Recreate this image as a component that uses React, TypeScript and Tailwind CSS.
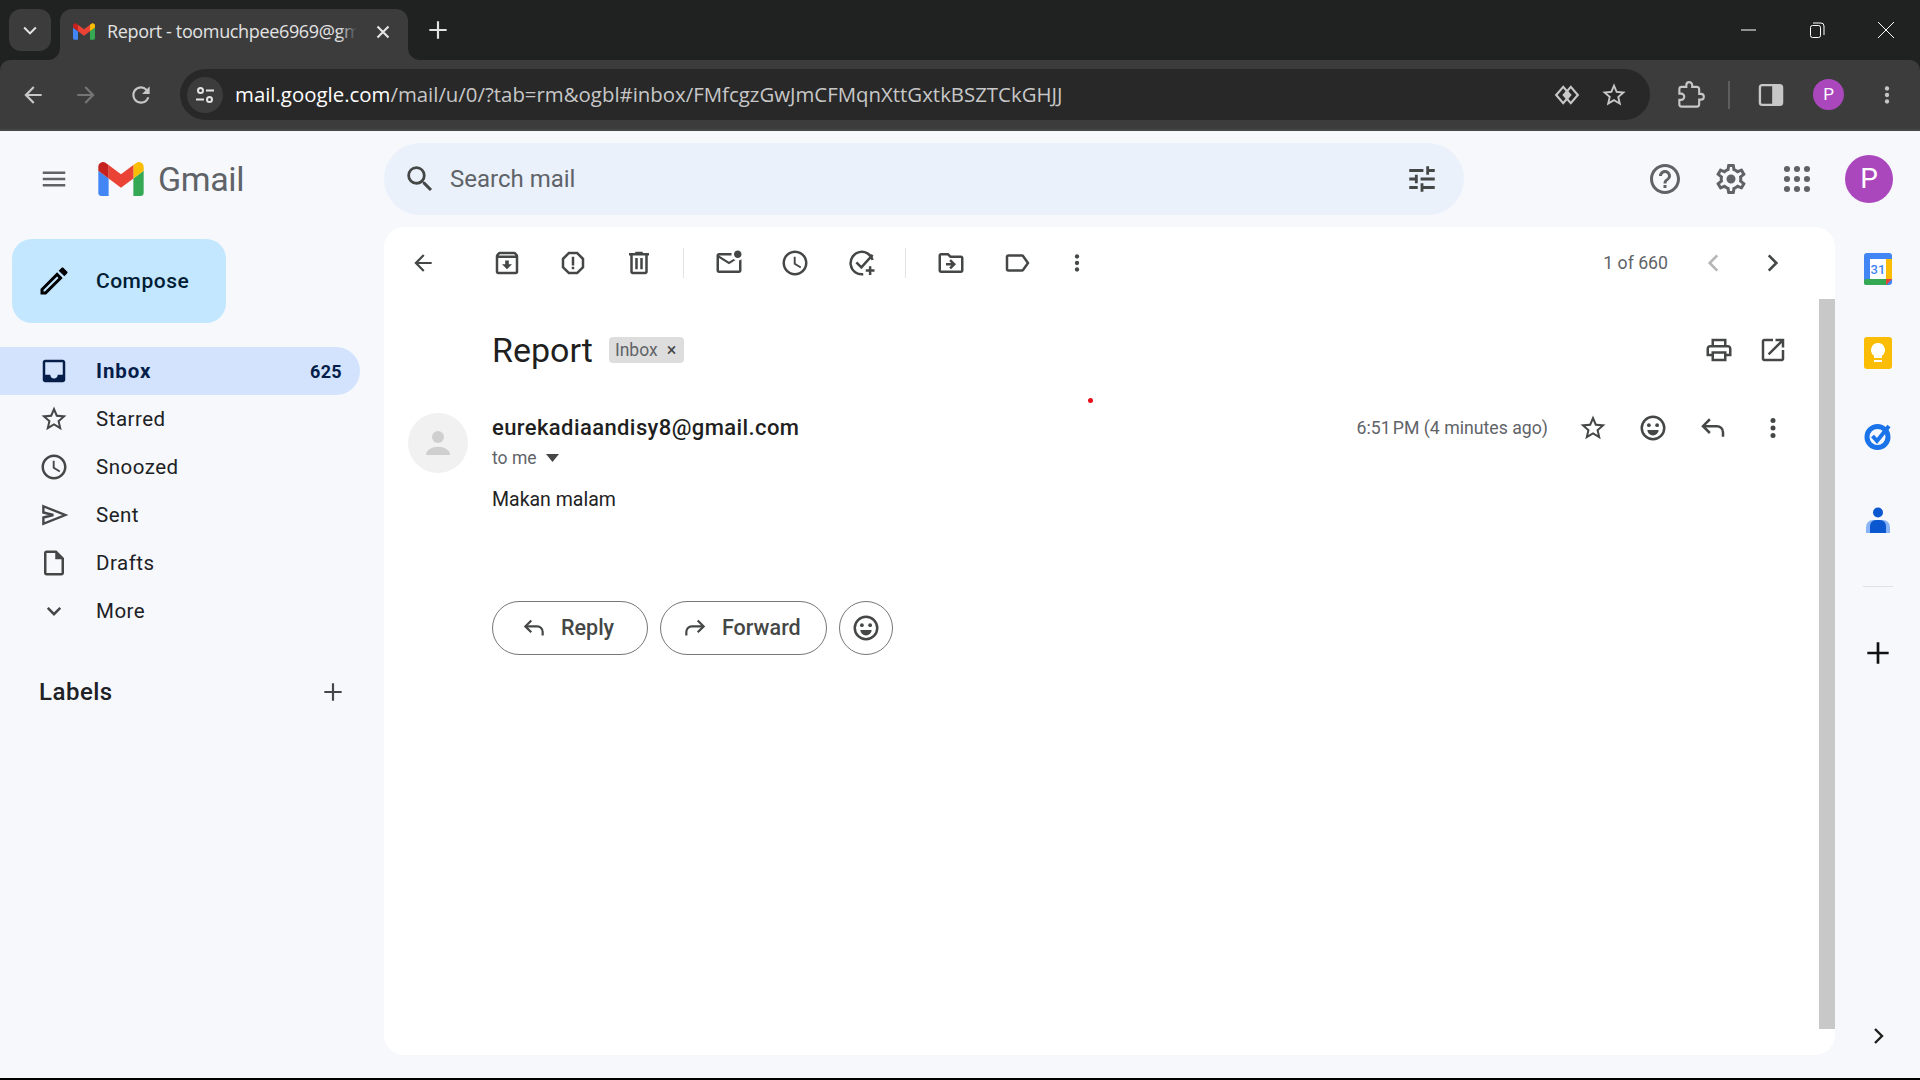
import type { ReactNode } from "react";

const paths = {
  menu: "M3 18h18v-2H3v2zm0-5h18v-2H3v2zm0-7v2h18V6H3z",
  search:
    "M15.5 14h-.79l-.28-.27A6.471 6.471 0 0 0 16 9.5 6.5 6.5 0 1 0 9.5 16c1.61 0 3.09-.59 4.23-1.57l.27.28v.79l5 4.99L20.49 19l-4.99-5zm-6 0C7.01 14 5 11.99 5 9.5S7.01 5 9.5 5 14 7.01 14 9.5 11.99 14 9.5 14z",
  tune: "M3 17v2h6v-2H3zM3 5v2h10V5H3zm10 16v-2h8v-2h-8v-2h-2v6h2zM7 9v2H3v2h4v2h2V9H7zm14 4v-2H11v2h10zm-6-4h2V7h4V5h-4V3h-2v6z",
  help: "M11 18h2v-2h-2v2zm1-16C6.48 2 2 6.48 2 12s4.48 10 10 10 10-4.48 10-10S17.52 2 12 2zm0 18c-4.41 0-8-3.59-8-8s3.59-8 8-8 8 3.59 8 8-3.59 8-8 8zm0-14c-2.21 0-4 1.79-4 4h2c0-1.1.9-2 2-2s2 .9 2 2c0 2-3 1.75-3 5h2c0-2.25 3-2.5 3-5 0-2.21-1.79-4-4-4z",
  settings:
    "M19.43 12.98c.04-.32.07-.64.07-.98 0-.34-.03-.66-.07-.98l2.11-1.65c.19-.15.24-.42.12-.64l-2-3.46c-.09-.16-.26-.25-.44-.25-.06 0-.12.01-.17.03l-2.49 1c-.52-.4-1.08-.73-1.69-.98l-.38-2.65C14.46 2.18 14.25 2 14 2h-4c-.25 0-.46.18-.49.42l-.38 2.65c-.61.25-1.17.59-1.69.98l-2.49-1c-.06-.02-.12-.03-.18-.03-.17 0-.34.09-.43.25l-2 3.46c-.13.22-.07.49.12.64l2.11 1.65c-.04.32-.07.65-.07.98 0 .33.03.66.07.98l-2.11 1.65c-.19.15-.24.42-.12.64l2 3.46c.09.16.26.25.44.25.06 0 .12-.01.17-.03l2.49-1c.52.4 1.08.73 1.69.98l.38 2.65c.03.24.24.42.49.42h4c.25 0 .46-.18.49-.42l.38-2.65c.61-.25 1.17-.59 1.69-.98l2.49 1c.06.02.12.03.18.03.17 0 .34-.09.43-.25l2-3.46c.12-.22.07-.49-.12-.64l-2.11-1.65zm-1.98-1.71c.04.31.05.52.05.73 0 .21-.02.43-.05.73l-.14 1.13.89.7 1.08.84-.7 1.21-1.27-.51-1.04-.42-.9.68c-.43.32-.84.56-1.25.73l-1.06.43-.16 1.13-.2 1.35h-1.4l-.19-1.35-.16-1.13-1.06-.43c-.43-.18-.83-.41-1.23-.71l-.91-.7-1.06.43-1.27.51-.7-1.21 1.08-.84.89-.7-.14-1.13c-.03-.31-.05-.54-.05-.74s.02-.43.05-.73l.14-1.13-.89-.7-1.08-.84.7-1.21 1.27.51 1.04.42.9-.68c.43-.32.84-.56 1.25-.73l1.06-.43.16-1.13.2-1.35h1.39l.19 1.35.16 1.13 1.06.43c.43.18.83.41 1.23.71l.91.7 1.06-.43 1.27-.51.7 1.21-1.07.85-.89.7.14 1.13zM12 9a3 3 0 1 0 0 6 3 3 0 0 0 0-6z",
  archive:
    "M20.54 5.23l-1.39-1.68C18.88 3.21 18.47 3 18 3H6c-.47 0-.88.21-1.16.55L3.46 5.23C3.17 5.57 3 6.02 3 6.5V19c0 1.1.9 2 2 2h14c1.1 0 2-.9 2-2V6.5c0-.48-.17-.93-.46-1.27zM6.24 5h11.52l.83 1H5.42l.82-1zM5 19V8h14v11H5zm8.45-9h-2.9v3H8l4 4 4-4h-2.55z",
  report:
    "M15.73 3H8.27L3 8.27v7.46L8.27 21h7.46L21 15.73V8.27L15.73 3zM19 14.9L14.9 19H9.1L5 14.9V9.1L9.1 5h5.8L19 9.1v5.8zM11 7h2v7h-2zM11 15h2v2h-2z",
  trash:
    "M15 4V3H9v1H4v2h1v13c0 1.1.9 2 2 2h10c1.1 0 2-.9 2-2V6h1V4h-5zm2 15H7V6h10v13zM9 8h2v9H9zm4 0h2v9h-2z",
  unread:
    "M22 8.98V18c0 1.1-.9 2-2 2H4c-1.1 0-2-.9-2-2V6c0-1.1.9-2 2-2h10.1c-.06.32-.1.66-.1 1 0 .34.04.68.1 1H4l8 5 3.67-2.29c.47.43 1.02.76 1.63.98L12 13 4 8v10h16V9.9c.74-.15 1.42-.48 2-.92zM16 5c0 1.66 1.34 3 3 3s3-1.34 3-3-1.34-3-3-3-3 1.34-3 3z",
  clock:
    "M11.99 2C6.47 2 2 6.48 2 12s4.47 10 9.99 10C17.52 22 22 17.52 22 12S17.52 2 11.99 2zM12 20c-4.42 0-8-3.58-8-8s3.58-8 8-8 8 3.58 8 8-3.58 8-8 8zm.5-13H11v6l5.25 3.15.75-1.23-4.5-2.67z",
  move: "M20 6h-8l-2-2H4c-1.1 0-1.99.9-1.99 2L2 18c0 1.1.9 2 2 2h16c1.1 0 2-.9 2-2V8c0-1.1-.9-2-2-2zm0 12H4V6h5.17l2 2H20v10zm-8.01-9l-1.41 1.41L12.16 12H8v2h4.16l-1.59 1.59L11.99 17 16 13.01 11.99 9z",
  label:
    "M17.63 5.84C17.27 5.33 16.67 5 16 5L5 5.01C3.9 5.01 3 5.9 3 7v10c0 1.1.9 1.99 2 1.99L16 19c.67 0 1.27-.33 1.63-.84L22 12l-4.37-6.16zM16 17H5V7h11l3.55 5L16 17z",
  print:
    "M19 8h-1V3H6v5H5c-1.66 0-3 1.34-3 3v6h4v4h12v-4h4v-6c0-1.66-1.34-3-3-3zM8 5h8v3H8V5zm8 12v2H8v-4h8v2zm2-2v-2H6v2H4v-4c0-.55.45-1 1-1h14c.55 0 1 .45 1 1v4h-2z",
  open: "M19 19H5V5h7V3H5c-1.11 0-2 .9-2 2v14c0 1.1.89 2 2 2h14c1.1 0 2-.9 2-2v-7h-2v7zM14 3v2h3.59l-9.83 9.83 1.41 1.41L19 6.41V10h2V3h-7z",
  star: "M22 9.24l-7.19-.62L12 2 9.19 8.63 2 9.24l5.46 4.73L5.82 21 12 17.27 18.18 21l-1.63-7.03L22 9.24zM12 15.4l-3.76 2.27 1-4.28-3.32-2.88 4.38-.38L12 6.1l1.71 4.04 4.38.38-3.32 2.88 1 4.28L12 15.4z",
  inbox:
    "M19 3H5c-1.1 0-2 .9-2 2v14c0 1.1.9 2 2 2h14c1.1 0 2-.9 2-2V5c0-1.1-.9-2-2-2zm0 12h-4c0 1.66-1.35 3-3 3s-3-1.34-3-3H4.99V5H19v10z",
  draft:
    "M14 2H6c-1.1 0-2 .9-2 2v16c0 1.1.89 2 1.99 2H18c1.1 0 2-.9 2-2V8l-6-6zM6 20V4h7v5h5v11H6z",
  pencil:
    "M3 17.25V21h3.75L17.81 9.94l-3.75-3.75L3 17.25zM5.92 19H5v-.92l9.06-9.06.92.92L5.92 19zM20.71 5.63l-2.34-2.34c-.2-.2-.45-.29-.71-.29s-.51.1-.7.29l-1.83 1.83 3.75 3.75 1.83-1.83c.39-.39.39-1.02 0-1.41z",
  plus: "M20 13h-7v7h-2v-7H4v-2h7V4h2v7h7v2z",
};

const Icon = ({ d, className = "w-[30px] h-[30px] text-[#444746]" }: { d: string; className?: string }) => (
  <svg viewBox="0 0 24 24" fill="currentColor" className={className}>
    <path d={d} />
  </svg>
);

const Stroke = ({ children, className = "w-[30px] h-[30px] text-[#444746]", width = 2 }: { children: ReactNode; className?: string; width?: number }) => (
  <svg viewBox="0 0 24 24" fill="none" stroke="currentColor" strokeWidth={width} className={className}>
    {children}
  </svg>
);

const MoreVert = ({ className = "w-[30px] h-[30px] text-[#444746]" }: { className?: string }) => (
  <svg viewBox="0 0 24 24" fill="currentColor" className={className}>
    <circle cx="12" cy="6" r="2" />
    <circle cx="12" cy="12" r="2" />
    <circle cx="12" cy="18" r="2" />
  </svg>
);

const Smile = ({ className = "w-[30px] h-[30px] text-[#444746]" }: { className?: string }) => (
  <svg viewBox="0 0 24 24" className={className}>
    <circle cx="12" cy="12" r="9" fill="none" stroke="currentColor" strokeWidth="2" />
    <circle cx="8.7" cy="9.7" r="1.5" fill="currentColor" />
    <circle cx="15.3" cy="9.7" r="1.5" fill="currentColor" />
    <path d="M7.5 13.5h9a4.5 4.5 0 0 1-9 0z" fill="currentColor" />
  </svg>
);

const ReplyIcon = ({ className = "w-[30px] h-[30px] text-[#444746]" }: { className?: string }) => (
  <Stroke className={className}>
    <path d="M9.5 5 4 10.5 9.5 16" />
    <path d="M4 10.5h11a5 5 0 0 1 5 5V19" />
  </Stroke>
);

const ForwardIcon = ({ className = "w-[30px] h-[30px] text-[#444746]" }: { className?: string }) => (
  <Stroke className={className}>
    <path d="M14.5 5 20 10.5 14.5 16" />
    <path d="M20 10.5H9a5 5 0 0 0-5 5V19" />
  </Stroke>
);

const AddTask = () => (
  <Stroke>
    <path d="M20.5 9.5A9 9 0 1 0 13 21" />
    <path d="m7.5 11.5 4 4 9-10" />
    <path d="M18.5 14.5v7M15 18h7" />
  </Stroke>
);

const Chevron = ({ left, className }: { left?: boolean; className: string }) => (
  <Stroke className={className} width={2.4}>
    <path d={left ? "M15 5l-7 7 7 7" : "M9 5l7 7-7 7"} />
  </Stroke>
);

const GmailLogo = ({ className }: { className: string }) => (
  <svg viewBox="52 42 88 66" className={className}>
    <path fill="#4285f4" d="M58 108h14V74L52 59v43c0 3.32 2.69 6 6 6" />
    <path fill="#34a853" d="M120 108h14c3.32 0 6-2.69 6-6V59l-20 15" />
    <path fill="#fbbc04" d="M120 48v26l20-15v-8c0-7.42-8.47-11.65-14.4-7.2" />
    <path fill="#ea4335" d="M72 74V48l24 18 24-18v26L96 92" />
    <path fill="#c5221f" d="M52 51v8l20 15V48l-5.6-4.2c-5.94-4.45-14.4-.22-14.4 7.2" />
  </svg>
);

const Slot = ({ children, className = "" }: { children: ReactNode; className?: string }) => (
  <div className={`w-[66px] h-[50px] flex items-center justify-center shrink-0 ${className}`}>{children}</div>
);

const NavRow = ({ icon, label }: { icon: ReactNode; label: string }) => (
  <div className="h-12 flex items-center">
    <div className="w-[96px] flex justify-center pl-[12px]">{icon}</div>
    <span className="text-[20.5px] tracking-[0.5px] text-[#202124]">{label}</span>
  </div>
);

const ChromeBar = () => (
  <div className="h-[60px] shrink-0 bg-[#202221] flex items-end relative">
    <div className="absolute left-[9px] top-[9px] w-[42px] h-[42px] rounded-[12px] bg-[#3c3c3c] flex items-center justify-center">
      <Chevron className="w-5 h-5 text-[#e3e3e3] rotate-90" />
    </div>
    <div className="ml-[60px] w-[348px] h-[51px] bg-[#3c3c3c] rounded-t-[12px] flex items-center pl-[13px] relative">
      <svg viewBox="0 0 12 12" className="absolute left-[-12px] bottom-0 w-3 h-3 text-[#3c3c3c]" fill="currentColor">
        <path d="M12 0v12H0a12 12 0 0 0 12-12z" />
      </svg>
      <svg viewBox="0 0 12 12" className="absolute right-[-12px] bottom-0 w-3 h-3 text-[#3c3c3c]" fill="currentColor">
        <path d="M0 0v12h12A12 12 0 0 1 0 0z" />
      </svg>
      <GmailLogo className="w-[22px] h-[17px] mb-[6px]" />
      <span className="relative ml-[12px] w-[250px] overflow-hidden whitespace-nowrap text-[18px] text-[#e3e3e3] font-['Open_Sans',sans-serif] mb-[6px] tracking-[-0.35px]">
        Report - toomuchpee6969@gm
        <span className="absolute right-0 top-0 bottom-0 w-[18px] bg-gradient-to-r from-transparent to-[#3c3c3c]" />
      </span>
      <Stroke className="w-6 h-6 text-[#e3e3e3] ml-[14px] mb-[6px]" width={2.2}>
        <path d="M6.5 6.5l11 11M17.5 6.5l-11 11" />
      </Stroke>
    </div>
    <Icon d={paths.plus} className="w-[26px] h-[26px] text-[#e3e3e3] ml-[17px] mb-[17px]" />
    <div className="ml-auto flex items-center h-[60px] text-white">
      <svg viewBox="0 0 18 18" className="w-[18px] h-[18px] mr-[50px]" fill="none" stroke="currentColor">
        <path d="M1 9h15" />
      </svg>
      <svg viewBox="0 0 18 18" className="w-[18px] h-[18px] mr-[51px]" fill="none" stroke="currentColor">
        <rect x="2.5" y="4.5" width="10" height="12" rx="2" />
        <path d="M5 2h8a3 3 0 0 1 3 3v9" />
      </svg>
      <svg viewBox="0 0 18 18" className="w-[18px] h-[18px] mr-[25px]" fill="none" stroke="currentColor">
        <path d="M1 1l16 16M17 1 1 17" />
      </svg>
    </div>
  </div>
);

const ChromeToolbar = () => (
  <div className="h-[71px] shrink-0 bg-[#202221]">
    <div className="h-full bg-[#3c3c3c] rounded-t-[10px] border-b-2 border-[#474747] flex items-center">
      <Icon d="M20 11H7.83l5.59-5.59L12 4l-8 8 8 8 1.41-1.41L7.83 13H20v-2z" className="w-[26px] h-[26px] text-[#c7c7c7] ml-[20px]" />
      <Icon d="M12 4l-1.41 1.41L16.17 11H4v2h12.17l-5.58 5.59L12 20l8-8z" className="w-[26px] h-[26px] text-[#757575] ml-[27px]" />
      <Icon
        d="M17.65 6.35A7.958 7.958 0 0 0 12 4c-4.42 0-7.99 3.58-7.99 8s3.57 8 7.99 8c3.73 0 6.84-2.55 7.73-6h-2.08A5.99 5.99 0 0 1 12 18c-3.31 0-6-2.69-6-6s2.69-6 6-6c1.66 0 3.14.69 4.22 1.78L13 11h7V4l-2.35 2.35z"
        className="w-[26px] h-[26px] text-[#c7c7c7] ml-[29px]"
      />
      <div className="ml-[26px] w-[1470px] h-[51px] rounded-full bg-[#282828] flex items-center pl-[7px]">
        <div className="w-[36px] h-[36px] rounded-full bg-[#3c3c3c] flex items-center justify-center">
          <svg viewBox="0 0 24 24" className="w-6 h-6 text-[#e3e3e3]" fill="none" stroke="currentColor" strokeWidth="2">
            <circle cx="7.5" cy="7.5" r="2.5" />
            <path d="M13 7.5h8M3 16.5h8" />
            <circle cx="16.5" cy="16.5" r="2.5" />
          </svg>
        </div>
        <span className="ml-[12px] text-[20.4px] text-[#c7c7c7] font-['Open_Sans',sans-serif] whitespace-nowrap">
          <span className="text-white">mail.google.com</span>/mail/u/0/?tab=rm&amp;ogbl#inbox/FMfcgzGwJmCFMqnXttGxtkBSZTCkGHJJ
        </span>
        <svg viewBox="0 0 24 24" className="w-[26px] h-[26px] text-[#c7c7c7] ml-auto" fill="none" stroke="currentColor" strokeWidth="2">
          <path d="M8.5 4.5 2 12l6.5 7.5L15 12z" />
          <path d="M15.5 4.5 9 12l6.5 7.5L22 12z" />
          <path d="M12 8l3 4-3 4-3-4z" fill="currentColor" stroke="none" />
        </svg>
        <Icon d={paths.star} className="w-[28px] h-[28px] text-[#c7c7c7] ml-[20px] mr-[22px]" />
      </div>
      <svg viewBox="0 0 24 24" className="w-[28px] h-[28px] text-[#c7c7c7] ml-[27px]" fill="none" stroke="currentColor" strokeWidth="1.8">
        <path d="M20.5 11H19V7c0-1.1-.9-2-2-2h-4V3.5C13 2.12 11.88 1 10.5 1S8 2.12 8 3.5V5H4c-1.1 0-1.99.9-1.99 2v3.8H3.5c1.49 0 2.7 1.21 2.7 2.7s-1.21 2.7-2.7 2.7H2V20c0 1.1.9 2 2 2h13c1.1 0 2-.9 2-2v-4h1.5c1.38 0 2.5-1.12 2.5-2.5S21.88 11 20.5 11z" />
      </svg>
      <div className="w-[2px] h-[28px] bg-[#5e5e5e] ml-[23px]" />
      <svg viewBox="0 0 24 24" className="w-[28px] h-[28px] text-[#c7c7c7] ml-[27px]">
        <rect x="2.5" y="3.5" width="19" height="17" rx="2" fill="none" stroke="currentColor" strokeWidth="2" />
        <rect x="13" y="4" width="8" height="16" fill="currentColor" />
      </svg>
      <div className="w-[31px] h-[31px] rounded-full bg-[#ab47bc] text-white text-[17px] flex items-center justify-center ml-[28px] font-['Roboto',sans-serif]">
        P
      </div>
      <MoreVert className="w-[26px] h-[26px] text-[#c7c7c7] ml-[30px]" />
    </div>
  </div>
);

const MailHeader = () => (
  <div className="h-[96px] flex items-center">
    <div className="w-[384px] flex items-center shrink-0">
      <Icon d={paths.menu} className="w-[30px] h-[30px] text-[#5f6368] ml-[39px]" />
      <GmailLogo className="w-[46px] h-[34px] ml-[29px]" />
      <span className="ml-[14px] text-[34px] text-[#5f6368] leading-none tracking-[-0.4px]">Gmail</span>
    </div>
    <div className="w-[1080px] h-[72px] rounded-full bg-[#eaf1fb] flex items-center shrink-0">
      <Icon d={paths.search} className="w-[34px] h-[34px] text-[#444746] ml-[19px]" />
      <span className="ml-[13px] text-[24px] text-[#5f6368]">Search mail</span>
      <Icon d={paths.tune} className="w-[34px] h-[34px] text-[#444746] ml-auto mr-[25px]" />
    </div>
    <Icon d={paths.help} className="w-[36px] h-[36px] text-[#5f6368] ml-[183px]" />
    <Icon d={paths.settings} className="w-[36px] h-[36px] text-[#5f6368] ml-[30px]" />
    <svg viewBox="0 0 24 24" fill="currentColor" className="w-[32px] h-[32px] text-[#5f6368] ml-[32px]">
      {[4.5, 12, 19.5].flatMap((y) =>
        [4.5, 12, 19.5].map((x) => <circle key={`${x}-${y}`} cx={x} cy={y} r="2.3" />),
      )}
    </svg>
    <div className="w-[48px] h-[48px] rounded-full bg-[#ab47bc] text-white text-[28px] flex items-center justify-center ml-[32px]">
      P
    </div>
  </div>
);

const Sidebar = () => (
  <div className="w-[384px] shrink-0">
    <div className="ml-[12px] mt-[12px] w-[214px] h-[84px] rounded-[20px] bg-[#c2e7ff] flex items-center">
      <Icon d={paths.pencil} className="w-[36px] h-[36px] text-[#000000] ml-[24px]" />
      <span className="ml-[24px] mt-[2px] text-[21px] text-[#001d35] font-medium tracking-[0.5px]">Compose</span>
    </div>
    <div className="mt-[24px]">
      <div className="w-[360px] h-12 rounded-r-full bg-[#d3e3fd] flex items-center">
        <div className="w-[96px] flex justify-center pl-[12px]">
          <Icon d={paths.inbox} className="w-[30px] h-[30px] text-[#041e49]" />
        </div>
        <span className="text-[20.5px] font-bold tracking-[0.9px] text-[#041e49]">Inbox</span>
        <span className="ml-auto mr-[18px] text-[18px] font-bold text-[#041e49] tracking-[0.3px]">625</span>
      </div>
      <NavRow icon={<Icon d={paths.star} />} label="Starred" />
      <NavRow icon={<Icon d={paths.clock} />} label="Snoozed" />
      <NavRow
        icon={
          <Stroke width={1.9}>
            <path d="M3.5 5 21 12 3.5 19v-5l8-2-8-2z" />
          </Stroke>
        }
        label="Sent"
      />
      <NavRow icon={<Icon d={paths.draft} />} label="Drafts" />
      <NavRow
        icon={
          <Stroke>
            <path d="M7 9.5l5 5 5-5" />
          </Stroke>
        }
        label="More"
      />
    </div>
    <div className="mt-[34px] pl-[39px] flex items-center h-[46px]">
      <span className="text-[24px] font-medium tracking-[0.5px] text-[#202124]">Labels</span>
      <Icon d={paths.plus} className="w-[26px] h-[26px] text-[#444746] ml-auto mr-[38px]" />
    </div>
  </div>
);

const MailToolbar = () => (
  <div className="h-[70px] flex items-center pt-[2px]">
    <Slot className="ml-[6px]">
      <Icon d="M20 11H7.83l5.59-5.59L12 4l-8 8 8 8 1.41-1.41L7.83 13H20v-2z" className="w-[26px] h-[26px] text-[#444746]" />
    </Slot>
    <Slot className="ml-[18px]">
      <Icon d={paths.archive} />
    </Slot>
    <Slot>
      <Icon d={paths.report} />
    </Slot>
    <Slot>
      <Icon d={paths.trash} />
    </Slot>
    <div className="w-px h-[30px] bg-[#e3e3e3] ml-[11px]" />
    <Slot className="ml-[12px]">
      <Icon d={paths.unread} />
    </Slot>
    <Slot>
      <Icon d={paths.clock} />
    </Slot>
    <Slot className="pl-[1px]">
      <AddTask />
    </Slot>
    <div className="w-px h-[30px] bg-[#e3e3e3] ml-[11px]" />
    <Slot className="ml-[12px]">
      <Icon d={paths.move} />
    </Slot>
    <Slot>
      <Icon d={paths.label} />
    </Slot>
    <Slot className="w-[54px]!">
      <MoreVert className="w-[26px] h-[26px] text-[#444746]" />
    </Slot>
    <span className="ml-auto text-[17.7px] text-[#5f6368]">1 of 660</span>
    <Chevron left className="w-[26px] h-[26px] text-[#b4b6b8] ml-[33px]" />
    <Chevron className="w-[26px] h-[26px] text-[#444746] ml-[32px] mr-[50px]" />
  </div>
);

const MailThread = () => (
  <div className="flex-1 pl-[108px] pr-[49px] relative">
    <div className="h-[104px] flex items-center pt-[2px]">
      <span className="text-[34px] text-[#1f1f1f] leading-none">Report</span>
      <span className="ml-[16px] h-[26px] w-[75px] rounded-[4px] bg-[#dddddd] text-[17.5px] text-[#5f6368] flex items-center pl-[6px] whitespace-nowrap">
        Inbox <span className="ml-[9px] text-[18px] leading-none text-[#444746]">×</span>
      </span>
      <Icon d={paths.print} className="w-[30px] h-[30px] text-[#444746] ml-auto mr-[24px]" />
      <Icon d={paths.open} className="w-[30px] h-[30px] text-[#444746] mr-[-2px]" />
    </div>
    <div className="flex">
      <div className="w-[60px] h-[60px] rounded-full bg-[#f1f1f1] flex items-center justify-center absolute left-[24px] top-[116px]">
        <svg viewBox="0 0 24 24" fill="#cfcfcf" className="w-[36px] h-[36px]">
          <circle cx="12" cy="8" r="4" />
          <path d="M4 20c0-3.5 4-5.5 8-5.5s8 2 8 5.5z" />
        </svg>
      </div>
      <div className="flex-1">
        <div className="h-[24px] text-[22px] tracking-[0.4px] font-medium leading-[24px] text-[#1f1f1f] mt-[15px]">eurekadiaandisy8@gmail.com</div>
        <div className="flex items-center mt-[6px] h-[24px]">
          <span className="text-[17.5px] text-[#5f6368]">to me</span>
          <svg viewBox="0 0 10 6" fill="#444746" className="w-[13px] h-[8px] ml-[9px]">
            <path d="M0 0h10L5 6z" />
          </svg>
        </div>
        <div className="text-[19.5px] text-[#222222] mt-[18px] leading-[24px]">Makan malam</div>
      </div>
      <div className="flex items-start pt-[12px]">
        <span className="text-[17.7px] text-[#5f6368] leading-[30px] mr-[30px]">6:51{"\u202f"}PM (4 minutes ago)</span>
        <Icon d={paths.star} className="w-[30px] h-[30px] text-[#444746]" />
        <Smile className="w-[30px] h-[30px] text-[#444746] ml-[30px]" />
        <ReplyIcon className="w-[30px] h-[30px] text-[#444746] ml-[30px]" />
        <MoreVert className="w-[30px] h-[30px] text-[#444746] ml-[30px] mr-[-2px]" />
      </div>
    </div>
    <div className="flex gap-3 mt-[89px]">
      <div className="w-[156px] h-[54px] rounded-full border border-[#747775] flex items-center pl-[28px]">
        <ReplyIcon className="w-[26px] h-[26px] text-[#444746]" />
        <span className="ml-[14px] text-[21.5px] font-medium text-[#444746]">Reply</span>
      </div>
      <div className="w-[167px] h-[54px] rounded-full border border-[#747775] flex items-center pl-[21px]">
        <ForwardIcon className="w-[26px] h-[26px] text-[#444746]" />
        <span className="ml-[14px] text-[21.5px] font-medium text-[#444746]">Forward</span>
      </div>
      <div className="w-[54px] h-[54px] rounded-full border border-[#747775] flex items-center justify-center">
        <Smile className="w-[30px] h-[30px] text-[#444746]" />
      </div>
    </div>
    <div className="absolute left-[704px] top-[101px] w-[5px] h-[5px] rounded-full bg-[#e8101a]" />
  </div>
);

const RightRail = () => (
  <div className="w-[85px] shrink-0 flex flex-col items-center">
    <svg viewBox="0 0 28 32" className="w-[28px] h-[32px] mt-[26px]">
      <rect width="28" height="32" rx="3" fill="#4285f4" />
      <rect x="22" y="6" width="6" height="20" fill="#fbbc04" />
      <rect y="26" width="24" height="6" rx="2" fill="#34a853" />
      <path d="M22 32v-6h6z" fill="#ea4335" />
      <rect x="6" y="6" width="16" height="20" fill="#fff" />
      <text x="14" y="21" fontSize="13" fontWeight="500" textAnchor="middle" fill="#4285f4" fontFamily="Roboto, sans-serif">31</text>
    </svg>
    <div className="w-[28px] h-[32px] mt-[52px] rounded-[3px] bg-[#fbbc04] flex items-center justify-center">
      <svg viewBox="0 0 14 20" className="w-[14px] h-[20px]" fill="#fff">
        <path d="M7 0a7 7 0 0 0-4 12.7V15h8v-2.3A7 7 0 0 0 7 0z" />
        <rect x="3" y="17" width="8" height="2" />
      </svg>
    </div>
    <svg viewBox="0 0 28 30" className="w-[28px] h-[30px] mt-[52px]" fill="none">
      <circle cx="13.5" cy="16" r="10.5" stroke="#1a73e8" strokeWidth="5" />
      <path d="M8.5 15l4.5 5L25 5" stroke="#1a73e8" strokeWidth="4" />
    </svg>
    <svg viewBox="0 0 24 26" className="w-[24px] h-[26px] mt-[56px]">
      <circle cx="12" cy="5.5" r="5" fill="#0b57d0" />
      <path d="M0 26v-6a7 7 0 0 1 7-7h10a7 7 0 0 1 7 7v6z" fill="#8ab4f8" />
      <path d="M4 26v-7a6 6 0 0 1 6-6h4a6 6 0 0 1 6 6v7z" fill="#0b57d0" />
    </svg>
    <div className="w-[30px] h-px bg-[#dfe1e5] mt-[53px]" />
    <Icon d={paths.plus} className="w-[32px] h-[32px] text-[#111111] mt-[50px]" />
    <Chevron className="w-[24px] h-[24px] text-[#1f1f1f] mt-[355px]" />
  </div>
);

export default function App() {
  return (
    <div className="w-[1920px] h-[1080px] overflow-hidden flex flex-col bg-black font-['Roboto',sans-serif]">
      <ChromeBar />
      <ChromeToolbar />
      <div className="h-[947px] shrink-0 bg-[#f6f8fc]">
        <MailHeader />
        <div className="flex">
          <Sidebar />
          <div className="w-[1451px] h-[828px] shrink-0 bg-white rounded-[20px] overflow-hidden flex flex-col relative">
            <MailToolbar />
            <MailThread />
            <div className="absolute right-0 top-[72px] w-4 h-[730px] bg-[#c8c8c8]" />
          </div>
          <RightRail />
        </div>
      </div>
    </div>
  );
}
